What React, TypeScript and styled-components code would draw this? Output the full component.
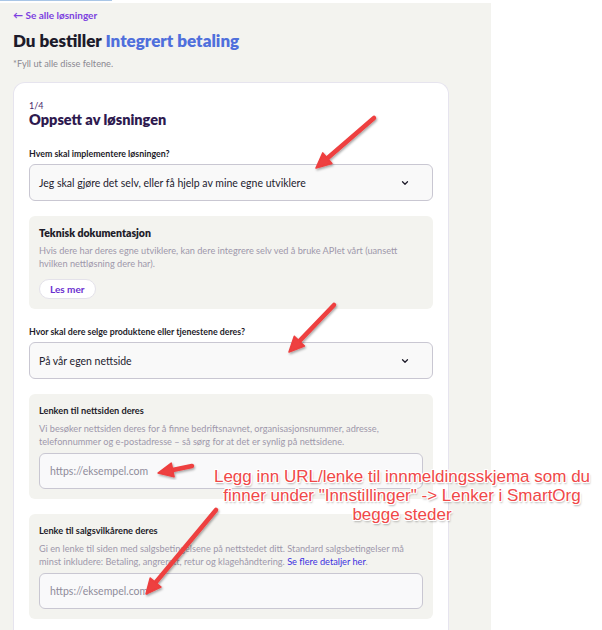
import React from "react";
import styled, { createGlobalStyle } from "styled-components";

const Global = createGlobalStyle`
  html, body { margin: 0; padding: 0; background: #ffffff; }
  body { font-family: "Lato", "Inter", sans-serif; overflow: hidden; }
  * { box-sizing: border-box; }
`;

const Frame = styled.div`
  position: relative;
  width: 602px;
  height: 630px;
  overflow: hidden;
`;

const TopStrip = styled.div`
  height: 3px;
  width: 491px;
  background: #ffffff;
`;

const Progress = styled.div`
  width: 112px;
  height: 1px;
  background: #a9c6e6;
`;

const Panel = styled.div`
  width: 491px;
  height: 627px;
  background: #f3f3ef;
  padding: 5px 13px 0 13px;
  display: flex;
  flex-direction: column;
`;

const BackLink = styled.a`
  font-size: 10px;
  font-weight: 700;
  color: #7c3fe0;
  text-decoration: none;
  line-height: 14px;
  display: flex;
  align-items: center;
  gap: 3px;
`;

const Title = styled.h1`
  margin: 8px 0 0 0;
  font-size: 17px;
  font-weight: 800;
  color: #1c1b2b;
  line-height: 22px;
`;

const Accent = styled.span`
  color: #4f6fdc;
`;

const Hint = styled.p`
  margin: 5px 0 0 0;
  font-size: 9.2px;
  color: #8a8891;
  line-height: 14px;
`;

const Card = styled.div`
  margin-top: 11px;
  width: 436px;
  flex: 1;
  background: #ffffff;
  border: 1px solid #e6e4ee;
  border-bottom: none;
  border-radius: 12px 12px 0 0;
  padding: 17px 15px 0 15px;
  display: flex;
  flex-direction: column;
`;

const Step = styled.div`
  font-size: 9px;
  color: #4a2a6a;
  line-height: 11px;
`;

const CardTitle = styled.h2`
  margin: 0;
  font-size: 14.5px;
  font-weight: 800;
  color: #2e1a4f;
  line-height: 18px;
`;

const Field = styled.div<{ $mt: number }>`
  margin-top: ${(p) => p.$mt}px;
  display: flex;
  flex-direction: column;
`;

const Label = styled.label`
  font-size: 8.8px;
  font-weight: 700;
  color: #1e1c2a;
  line-height: 13px;
  margin-bottom: 4px;
`;

const Select = styled.div`
  flex: none;
  height: 37px;
  border: 1px solid #c9c7d2;
  border-radius: 6px;
  background: #f9f9f9;
  display: flex;
  align-items: center;
  justify-content: space-between;
  padding: 0 22px 0 9px;
  font-size: 10.5px;
  color: #23212e;
`;

const InfoBox = styled.div<{ $mt: number }>`
  margin-top: ${(p) => p.$mt}px;
  background: #f3f3ef;
  border-radius: 6px;
  padding: 10px;
  display: flex;
  flex-direction: column;
`;

const InfoTitle = styled.div<{ $strong?: boolean }>`
  font-size: ${(p) => (p.$strong ? "10.5px" : "9.2px")};
  font-weight: ${(p) => (p.$strong ? 800 : 700)};
  color: #1e1c2a;
  line-height: 14px;
`;

const InfoText = styled.p`
  margin: 4px 0 0 0;
  font-size: 9.2px;
  color: #9e98ab;
  line-height: 13px;
`;

const TextLink = styled.a`
  color: #3b2fe0;
  text-decoration: none;
`;

const Pill = styled.button`
  margin-top: 9px;
  align-self: flex-start;
  height: 20px;
  padding: 0 10px;
  border-radius: 10px;
  border: 1px solid #e4e2ea;
  background: #ffffff;
  color: #6b2fd0;
  font-family: inherit;
  font-size: 10px;
  font-weight: 700;
`;

const Input = styled.div`
  margin-top: 5px;
  height: 36px;
  border: 1px solid #c9c7d2;
  border-radius: 6px;
  background: #f9f9fa;
  display: flex;
  align-items: center;
  padding: 0 10px;
  font-size: 10.5px;
  color: #8f8c9a;
`;

const Overlay = styled.svg`
  position: absolute;
  left: 0;
  top: 0;
  pointer-events: none;
`;

const Note = styled.div`
  position: absolute;
  left: 208px;
  top: 467px;
  width: 388px;
  text-align: center;
  font-family: "Liberation Sans", Arial, sans-serif;
  font-size: 17px;
  line-height: 19px;
  color: #f04848;
  text-shadow: 1px 1px 0 #fff, -1px -1px 0 #fff, 1px -1px 0 #fff, -1px 1px 0 #fff,
    0 1px 0 #fff, 0 -1px 0 #fff, 1px 0 0 #fff, -1px 0 0 #fff,
    1px 2px 2px rgba(0, 0, 0, 0.35);
`;

const Chevron = () => (
  <svg width="10" height="10" viewBox="0 0 24 24" fill="none" stroke="#1e1c2a" strokeWidth="3" strokeLinecap="round" strokeLinejoin="round">
    <path d="M6 9l6 6 6-6" />
  </svg>
);

const Arrow = ({ x1, y1, x2, y2 }: { x1: number; y1: number; x2: number; y2: number }) => {
  const a = Math.atan2(y2 - y1, x2 - x1);
  const len = 15;
  const w = 7;
  const bx = x2 - len * Math.cos(a);
  const by = y2 - len * Math.sin(a);
  const px = -Math.sin(a) * w;
  const py = Math.cos(a) * w;
  return (
    <g filter="url(#shadow)">
      <line x1={x1} y1={y1} x2={bx} y2={by} stroke="#ee3f3f" strokeWidth="4.5" strokeLinecap="round" />
      <polygon points={`${x2},${y2} ${bx + px},${by + py} ${bx - px},${by - py}`} fill="#ee3f3f" stroke="#ee3f3f" strokeWidth="1.5" strokeLinejoin="round" />
    </g>
  );
};

export default function App() {
  return (
    <Frame>
      <Global />
      <TopStrip>
        <Progress />
      </TopStrip>
      <Panel>
        <BackLink href="#">← Se alle løsninger</BackLink>
        <Title>
          Du bestiller <Accent>Integrert betaling</Accent>
        </Title>
        <Hint>*Fyll ut alle disse feltene.</Hint>
        <Card>
          <Step>1/4</Step>
          <CardTitle>Oppsett av løsningen</CardTitle>
          <Field $mt={18}>
            <Label>Hvem skal implementere løsningen?</Label>
            <Select>
              <span>Jeg skal gjøre det selv, eller få hjelp av mine egne utviklere</span>
              <Chevron />
            </Select>
          </Field>
          <InfoBox $mt={15}>
            <InfoTitle $strong>Teknisk dokumentasjon</InfoTitle>
            <InfoText>
              Hvis dere har deres egne utviklere, kan dere integrere selv ved å bruke APIet vårt (uansett hvilken nettløsning dere har).
            </InfoText>
            <Pill>Les mer</Pill>
          </InfoBox>
          <Field $mt={16}>
            <Label>Hvor skal dere selge produktene eller tjenestene deres?</Label>
            <Select>
              <span>På vår egen nettside</span>
              <Chevron />
            </Select>
          </Field>
          <InfoBox $mt={15}>
            <InfoTitle>Lenken til nettsiden deres</InfoTitle>
            <InfoText>
              Vi besøker nettsiden deres for å finne bedriftsnavnet, organisasjonsnummer, adresse, telefonnummer og e-postadresse – så sørg for at det er synlig på nettsidene.
            </InfoText>
            <Input>https://eksempel.com</Input>
          </InfoBox>
          <InfoBox $mt={15}>
            <InfoTitle>Lenke til salgsvilkårene deres</InfoTitle>
            <InfoText>
              Gi en lenke til siden med salgsbetingelsene på nettstedet ditt. Standard salgsbetingelser må minst inkludere: Betaling, angrerett, retur og klagehåndtering. <TextLink href="#">Se flere detaljer her</TextLink>.
            </InfoText>
            <Input>https://eksempel.com</Input>
          </InfoBox>
        </Card>
      </Panel>
      <Overlay width="602" height="630" viewBox="0 0 602 630">
        <defs>
          <filter id="shadow" x="-20%" y="-20%" width="140%" height="140%">
            <feDropShadow dx="1" dy="1.5" stdDeviation="1.2" floodColor="#000" floodOpacity="0.35" />
          </filter>
        </defs>
        <Arrow x1={374} y1={118} x2={316} y2={168} />
        <Arrow x1={334} y1={305} x2={289} y2={352} />
        <Arrow x1={192} y1={466} x2={158} y2={473} />
        <Arrow x1={216} y1={510} x2={146} y2={594} />
      </Overlay>
      <Note>
        Legg inn URL/lenke til innmeldingsskjema som du
        <br />
        finner under "Innstillinger" -&gt; Lenker i SmartOrg
        <br />
        begge steder
      </Note>
    </Frame>
  );
}
